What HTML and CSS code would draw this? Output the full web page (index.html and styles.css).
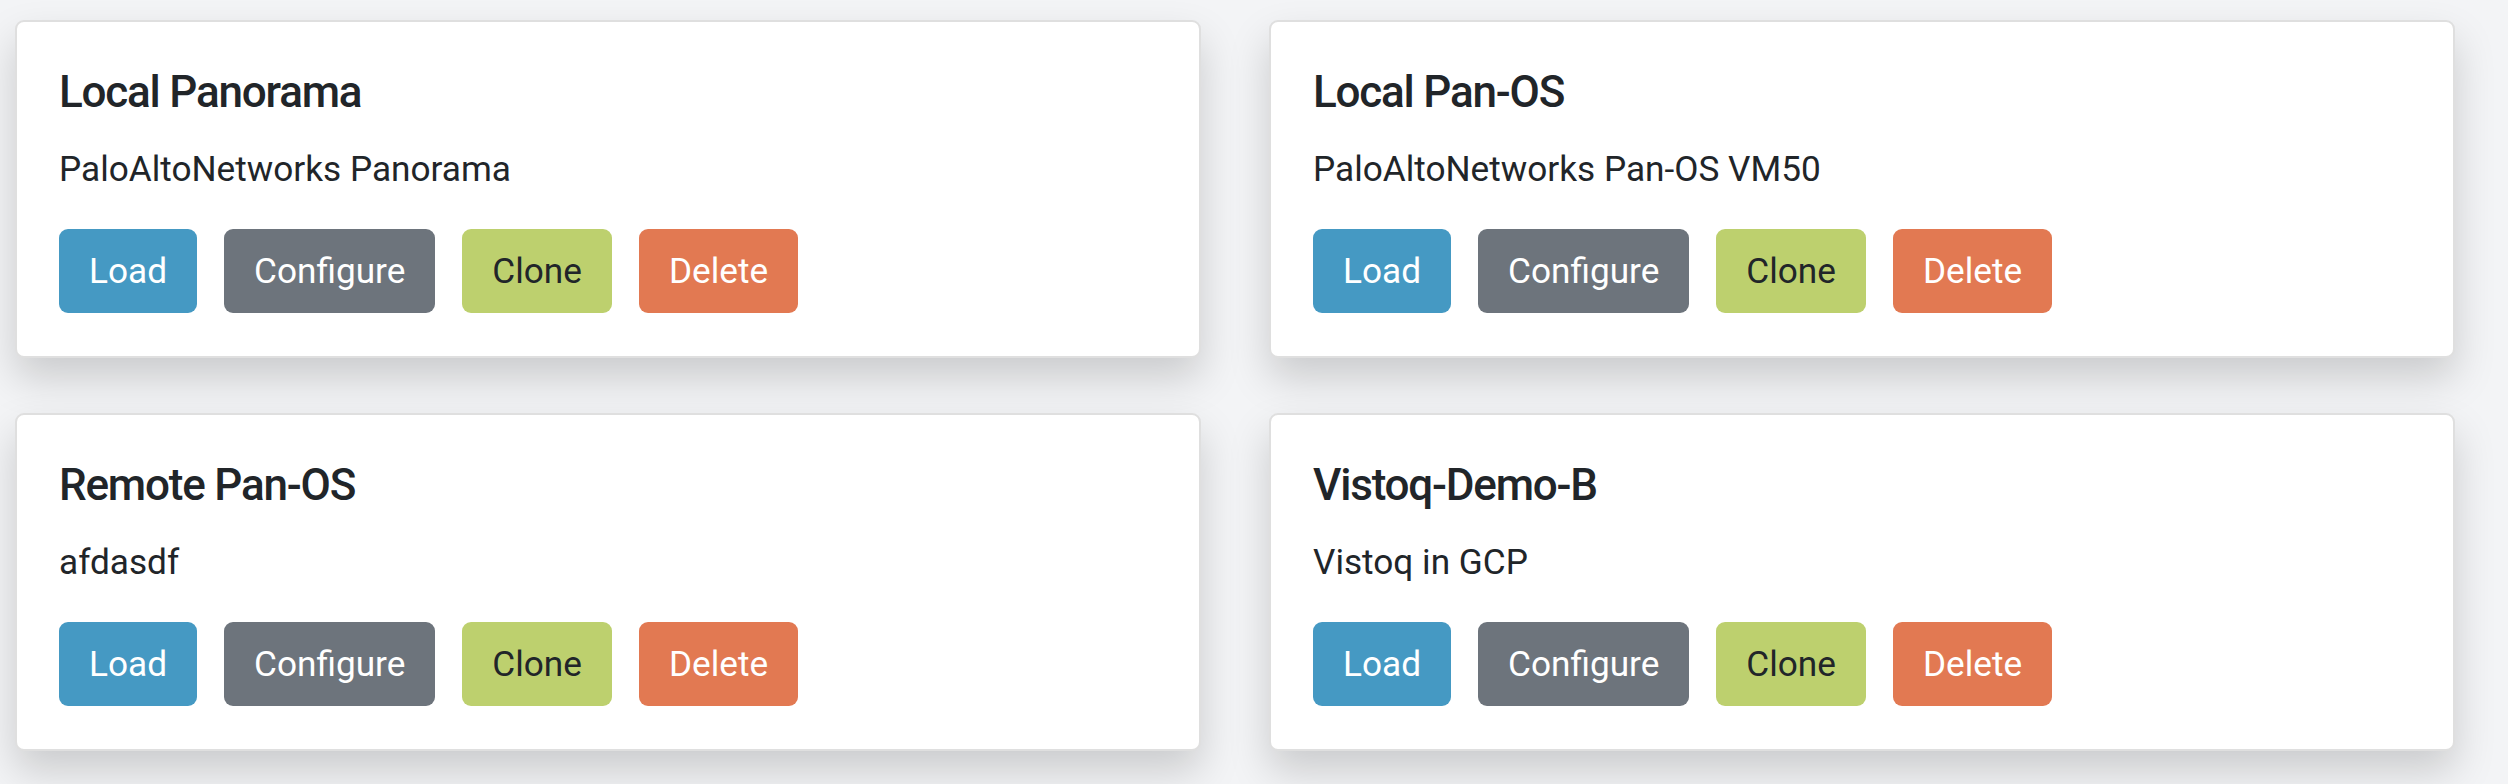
FILE: index.html
```html
<!DOCTYPE html>
<html lang="en">
<head>
<meta charset="utf-8">
<title>Environments</title>
<link rel="stylesheet" href="styles.css">
</head>
<body>
<main class="grid">
  <section class="card">
    <h5 class="card-title">Local Panorama</h5>
    <p class="card-text">PaloAltoNetworks Panorama</p>
    <div class="actions">
      <button class="btn btn-load">Load</button>
      <button class="btn btn-configure">Configure</button>
      <button class="btn btn-clone">Clone</button>
      <button class="btn btn-delete">Delete</button>
    </div>
  </section>
  <section class="card">
    <h5 class="card-title">Local Pan-OS</h5>
    <p class="card-text">PaloAltoNetworks Pan-OS VM50</p>
    <div class="actions">
      <button class="btn btn-load">Load</button>
      <button class="btn btn-configure">Configure</button>
      <button class="btn btn-clone">Clone</button>
      <button class="btn btn-delete">Delete</button>
    </div>
  </section>
  <section class="card">
    <h5 class="card-title">Remote Pan-OS</h5>
    <p class="card-text">afdasdf</p>
    <div class="actions">
      <button class="btn btn-load">Load</button>
      <button class="btn btn-configure">Configure</button>
      <button class="btn btn-clone">Clone</button>
      <button class="btn btn-delete">Delete</button>
    </div>
  </section>
  <section class="card">
    <h5 class="card-title">Vistoq-Demo-B</h5>
    <p class="card-text">Vistoq in GCP</p>
    <div class="actions">
      <button class="btn btn-load">Load</button>
      <button class="btn btn-configure">Configure</button>
      <button class="btn btn-clone">Clone</button>
      <button class="btn btn-delete">Delete</button>
    </div>
  </section>
</main>
</body>
</html>
```

FILE: styles.css
```css
html, body {
  margin: 0;
  padding: 0;
}
body {
  background: #f3f4f6;
  font-family: "Roboto", "Inter", "Liberation Sans", sans-serif;
  color: #212529;
  height: 784px;
  overflow: hidden;
}
.grid {
  display: grid;
  grid-template-columns: 1186px 1186px;
  column-gap: 68px;
  row-gap: 55px;
  padding: 20px 0 0 15px;
}
.card {
  background: #fff;
  border: 2px solid #dfdfdf;
  border-radius: 9px;
  box-shadow: 0 20px 40px rgba(0, 0, 0, 0.17);
  padding: 44px 42px 42px 42px;
  height: 338px;
  box-sizing: border-box;
}
.card-title {
  margin: 0;
  font-size: 44px;
  font-weight: 500;
  line-height: 53px;
  letter-spacing: -1.2px;
}
.card-text {
  margin: 24px 0 0 0;
  font-size: 35.2px;
  line-height: 53px;
}
.actions {
  display: flex;
  gap: 27px;
  margin-top: 33px;
}
.btn {
  font-family: inherit;
  font-size: 35.2px;
  line-height: 53px;
  padding: 15.5px 30px;
  border: 0;
  border-radius: 9px;
  color: #fff;
}
.btn-load { background: #4599c3; }
.btn-configure { background: #6d747c; }
.btn-clone { background: #bdd06e; color: #212529; }
.btn-delete { background: #e27952; }
```
